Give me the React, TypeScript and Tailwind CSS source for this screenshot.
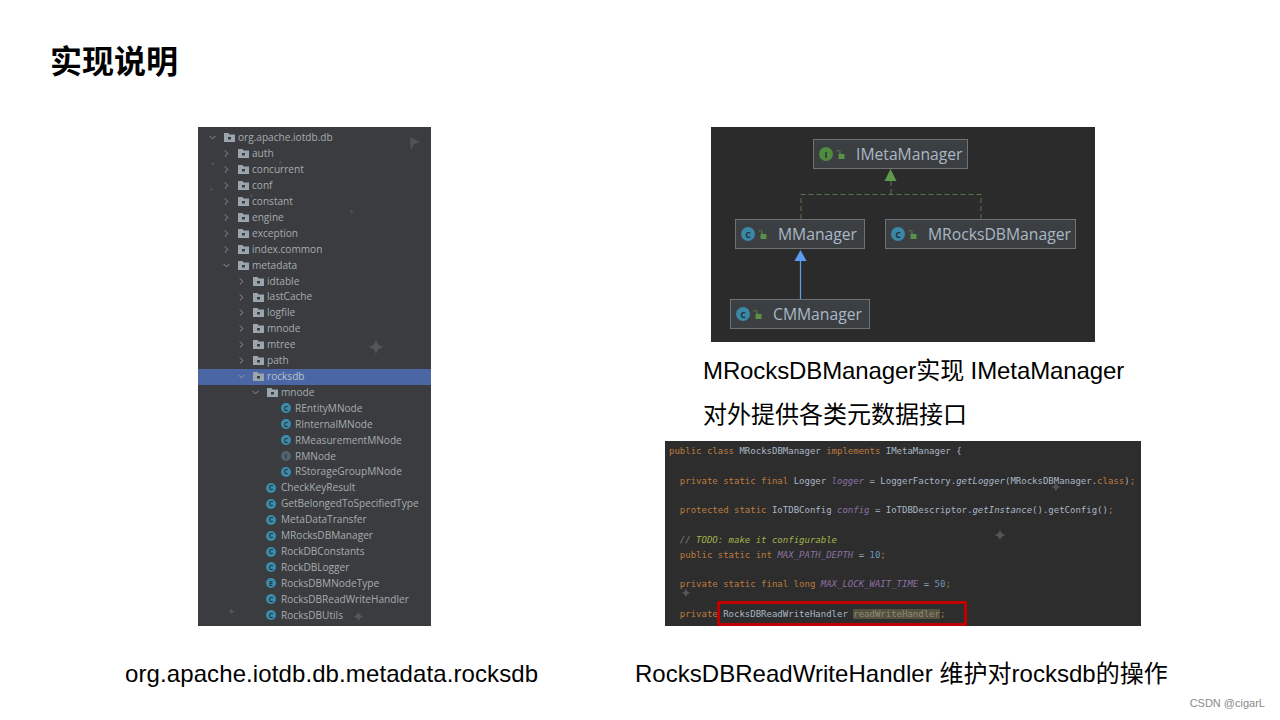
import { ChevronDown, ChevronRight } from "lucide-react";

type TreeRow = {
  name: string;
  depth: number;
  kind: "folder" | "class" | "enum" | "iface";
  open?: boolean;
  selected?: boolean;
};

const rows: TreeRow[] = [
  { name: "org.apache.iotdb.db", depth: 0, kind: "folder", open: true },
  { name: "auth", depth: 1, kind: "folder" },
  { name: "concurrent", depth: 1, kind: "folder" },
  { name: "conf", depth: 1, kind: "folder" },
  { name: "constant", depth: 1, kind: "folder" },
  { name: "engine", depth: 1, kind: "folder" },
  { name: "exception", depth: 1, kind: "folder" },
  { name: "index.common", depth: 1, kind: "folder" },
  { name: "metadata", depth: 1, kind: "folder", open: true },
  { name: "idtable", depth: 2, kind: "folder" },
  { name: "lastCache", depth: 2, kind: "folder" },
  { name: "logfile", depth: 2, kind: "folder" },
  { name: "mnode", depth: 2, kind: "folder" },
  { name: "mtree", depth: 2, kind: "folder" },
  { name: "path", depth: 2, kind: "folder" },
  { name: "rocksdb", depth: 2, kind: "folder", open: true, selected: true },
  { name: "mnode", depth: 3, kind: "folder", open: true },
  { name: "REntityMNode", depth: 5, kind: "class" },
  { name: "RInternalMNode", depth: 5, kind: "class" },
  { name: "RMeasurementMNode", depth: 5, kind: "class" },
  { name: "RMNode", depth: 5, kind: "iface" },
  { name: "RStorageGroupMNode", depth: 5, kind: "class" },
  { name: "CheckKeyResult", depth: 4, kind: "class" },
  { name: "GetBelongedToSpecifiedType", depth: 4, kind: "class" },
  { name: "MetaDataTransfer", depth: 4, kind: "class" },
  { name: "MRocksDBManager", depth: 4, kind: "class" },
  { name: "RockDBConstants", depth: 4, kind: "class" },
  { name: "RockDBLogger", depth: 4, kind: "class" },
  { name: "RocksDBMNodeType", depth: 4, kind: "enum" },
  { name: "RocksDBReadWriteHandler", depth: 4, kind: "class" },
  { name: "RocksDBUtils", depth: 4, kind: "class" },
];

const depthPad: Record<number, string> = {
  0: "pl-[9px]",
  1: "pl-[23px]",
  2: "pl-[38px]",
  3: "pl-[52px]",
  4: "pl-[68px]",
  5: "pl-[83px]",
};

function Folder() {
  return (
    <svg width="11" height="9" viewBox="0 0 11 9" className="shrink-0">
      <path d="M0 0h4.500l1 1.500H11V9H0z" fill="#9aa5ad" />
      <rect x="4" y="4" width="3" height="2.500" fill="#3b3e41" />
    </svg>
  );
}

function ClassIcon({ letter, color = "#3b8cab" }: { letter: string; color?: string }) {
  return (
    <span
      className="w-[10px] h-[10px] rounded-full shrink-0 flex items-center justify-center text-[7px] leading-none font-bold text-[#20333d]"
      style={{ backgroundColor: color }}
    >
      {letter}
    </span>
  );
}

function Sparkle({ className, size }: { className: string; size: number }) {
  return (
    <svg width={size} height={size} viewBox="0 0 16 16" className={className}>
      <path d="M8 0c.8 5 2.600 7 8 8-5.400 1-7.200 3-8 8-.8-5-2.600-7-8-8 5.400-1 7.200-3 8-8z" fill="#54575a" />
    </svg>
  );
}

function ProjectTree() {
  return (
    <div className="relative w-[233px] h-[499px] bg-[#3a3c3f] pt-[3px] overflow-hidden font-['Open_Sans',sans-serif] text-[10.1px] text-[#a6acb0]">
      {rows.map((r, i) => (
        <div
          key={i}
          className={`h-[15.92px] flex items-center ${depthPad[r.depth]} ${r.selected ? "bg-[#4a66a4] text-[#b9c2cf]" : ""}`}
        >
          {r.kind === "folder" ? (
            <>
              {r.open ? (
                <ChevronDown size={11} strokeWidth={1.7} className="shrink-0 mr-[6px] text-[#a6acb0]" />
              ) : (
                <ChevronRight size={11} strokeWidth={1.7} className="shrink-0 mr-[6px] text-[#a6acb0]" />
              )}
              <Folder />
              <span className="ml-[3px] whitespace-nowrap">{r.name}</span>
            </>
          ) : (
            <>
              <ClassIcon
                letter={r.kind === "enum" ? "E" : r.kind === "iface" ? "I" : "C"}
                color={r.kind === "iface" ? "#52656f" : "#3b8cab"}
              />
              <span className={`${r.depth === 4 ? "ml-[5px]" : "ml-[4px]"} whitespace-nowrap`}>{r.name}</span>
            </>
          )}
        </div>
      ))}
      {/* wallpaper sparkles */}
      <Sparkle className="absolute left-[170px] top-[212px]" size={16} />
      <Sparkle className="absolute left-[155px] top-[484px]" size={11} />
      <Sparkle className="absolute left-[30px] top-[481px]" size={7} />
      <svg width="10" height="14" viewBox="0 0 10 14" className="absolute left-[212px] top-[10px]">
        <path d="M0 0l10 5-6 2-3 7z" fill="#505356" />
      </svg>
      <span className="absolute left-[12px] top-[61px] w-[3px] h-[3px] rounded-full bg-[#4e5154]" />
      <span className="absolute left-[52px] top-[67px] w-[3px] h-[3px] rounded-full bg-[#4e5154]" />
      <span className="absolute left-[152px] top-[83px] w-[3px] h-[3px] rounded-full bg-[#4e5154]" />
      <span className="absolute left-[13px] top-[35px] w-[3px] h-[3px] rounded-full bg-[#4e5154]" />
      <span className="absolute left-[81px] top-[34px] w-[3px] h-[3px] rounded-full bg-[#4e5154]" />
    </div>
  );
}

function UmlBox({
  name,
  letter,
  color,
  className,
}: {
  name: string;
  letter: string;
  color: string;
  className: string;
}) {
  return (
    <div
      className={`absolute h-[30px] bg-[#3c3f41] border border-[#6f7274] flex items-center pl-[5px] font-['Open_Sans',sans-serif] text-[15.7px] text-[#a9b7c6] whitespace-nowrap ${className}`}
    >
      <span
        className="w-[14px] h-[14px] rounded-full shrink-0 flex items-center justify-center text-[9px] font-bold leading-none text-[#22333b]"
        style={{ backgroundColor: color }}
      >
        {letter}
      </span>
      <svg width="9" height="9" viewBox="0 0 9 9" className="ml-[3px] shrink-0">
        <path d="M1 1.500a1.500 1.500 0 0 1 3 0V4" stroke="#5a9048" fill="none" />
        <rect x="2.500" y="4" width="6" height="5" fill="#5a9048" />
      </svg>
      <span className="ml-[11px] mt-[2px]">{name}</span>
    </div>
  );
}

function UmlDiagram() {
  return (
    <div className="relative w-[384px] h-[215px] bg-[#2b2b2b]">
      <svg width="384" height="215" className="absolute inset-0">
        <path d="M90 92V67.500H270V92" fill="none" stroke="#56794a" strokeDasharray="5 3" />
        <path d="M180 67V54" fill="none" stroke="#56794a" strokeDasharray="5 3" />
        <path d="M179.500 42l6 12h-12z" fill="#5f9a4c" />
        <path d="M89.500 172V132" fill="none" stroke="#5a9ef0" strokeWidth="1.200" />
        <path d="M89.500 123l6 11h-12z" fill="#5a9ef0" />
      </svg>
      <UmlBox name="IMetaManager" letter="I" color="#4f8a3f" className="left-[102px] top-[12px] w-[155px]" />
      <UmlBox name="MManager" letter="C" color="#3b87a8" className="left-[24px] top-[92px] w-[130px]" />
      <UmlBox name="MRocksDBManager" letter="C" color="#3b87a8" className="left-[174px] top-[92px] w-[191px]" />
      <UmlBox name="CMManager" letter="C" color="#3b87a8" className="left-[19px] top-[172px] w-[140px]" />
    </div>
  );
}

const kw = "text-[#bd7b3f]";
const plain = "text-[#a9b7c6]";
const field = "text-[#8a6fa0] italic";
const num = "text-[#6c95b5]";

function CodePanel() {
  return (
    <div className="relative w-[476px] h-[185px] bg-[#2d2d2d] overflow-hidden pl-[4px] pt-[3px] font-['DejaVu_Sans_Mono',monospace] text-[9px] leading-[14.8px] whitespace-pre">
      <div>
        <span className={kw}>public class </span>
        <span className={plain}>MRocksDBManager </span>
        <span className={kw}>implements </span>
        <span className={plain}>IMetaManager {"{"}</span>
      </div>
      <div>&nbsp;</div>
      <div>
        <span className={kw}>  private static final </span>
        <span className={plain}>Logger </span>
        <span className={field}>logger</span>
        <span className={plain}> = LoggerFactory.</span>
        <span className={`${plain} italic`}>getLogger</span>
        <span className={plain}>(MRocksDBManager.</span>
        <span className={kw}>class</span>
        <span className={plain}>)</span>
        <span className={kw}>;</span>
      </div>
      <div>&nbsp;</div>
      <div>
        <span className={kw}>  protected static </span>
        <span className={plain}>IoTDBConfig </span>
        <span className={field}>config</span>
        <span className={plain}> = IoTDBDescriptor.</span>
        <span className={`${plain} italic`}>getInstance</span>
        <span className={plain}>().getConfig()</span>
        <span className={kw}>;</span>
      </div>
      <div>&nbsp;</div>
      <div>
        <span className="text-[#808080] italic">  // </span>
        <span className="text-[#a4b24a] italic">TODO: make it configurable</span>
      </div>
      <div>
        <span className={kw}>  public static int </span>
        <span className={field}>MAX_PATH_DEPTH</span>
        <span className={plain}> = </span>
        <span className={num}>10</span>
        <span className={kw}>;</span>
      </div>
      <div>&nbsp;</div>
      <div>
        <span className={kw}>  private static final long </span>
        <span className={field}>MAX_LOCK_WAIT_TIME</span>
        <span className={plain}> = </span>
        <span className={num}>50</span>
        <span className={kw}>;</span>
      </div>
      <div>&nbsp;</div>
      <div>
        <span className={kw}>  private </span>
        <span className={plain}>RocksDBReadWriteHandler </span>
        <span className="text-[#8f8a78] bg-[#55513f]">readWriteHandler</span>
        <span className={kw}>;</span>
      </div>
      {/* red highlight drawn over the screenshot */}
      <div className="absolute left-[52px] top-[160px] w-[250px] h-[25px] border-[3px] border-[#c00000]" />
      <Sparkle className="absolute left-[329px] top-[88px]" size={12} />
      <Sparkle className="absolute left-[386px] top-[41px]" size={10} />
      <Sparkle className="absolute left-[16px] top-[147px]" size={10} />
    </div>
  );
}

export default function App() {
  return (
    <div className="relative w-[1280px] h-[720px] bg-white overflow-hidden font-['Liberation_Sans','Noto_Sans_CJK_SC',sans-serif] text-[24px] text-black">
      <h1 className="h-[127px] pl-[50px] pt-[40px] text-[32px] leading-[44px] font-bold">实现说明</h1>

      <div className="flex pl-[125px]">
        <div className="w-[510px] shrink-0">
          <div className="ml-[73px]">
            <ProjectTree />
          </div>
          <p className="mt-[30px] leading-[36px] tracking-[0.1px] whitespace-nowrap">org.apache.iotdb.db.metadata.rocksdb</p>
        </div>

        <div>
          <div className="ml-[76px]">
            <UmlDiagram />
          </div>
          <div className="ml-[68px] mt-[7px] leading-[44px] whitespace-nowrap">
            <p className="tracking-[-0.1px]">MRocksDBManager实现 IMetaManager</p>
            <p>对外提供各类元数据接口</p>
          </div>
          <div className="ml-[30px] mt-[4px]">
            <CodePanel />
          </div>
          <p className="mt-[30px] leading-[36px] tracking-[0.03px] whitespace-nowrap">RocksDBReadWriteHandler 维护对rocksdb的操作</p>
        </div>
      </div>

      <span className="absolute right-[15px] bottom-[10px] text-[11px] leading-[14px] text-[#8a8a8a]">CSDN @cigarL</span>
    </div>
  );
}
